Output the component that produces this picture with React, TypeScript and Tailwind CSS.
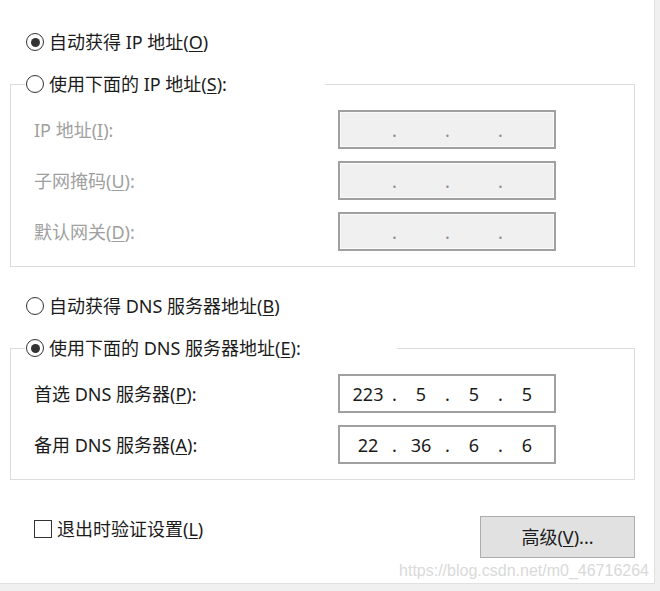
import React from "react";

const FONT = { fontFamily: '"Noto Sans", "Noto Sans CJK SC", sans-serif' };

function Radio({ checked }: { checked?: boolean }) {
  return (
    <span className="w-[18px] h-[18px] rounded-full border border-[#333] bg-white flex items-center justify-center shrink-0">
      {checked && <span className="w-[9px] h-[9px] rounded-full bg-[#333]" />}
    </span>
  );
}

function Key({ k }: { k: string }) {
  return <span className="underline underline-offset-2 decoration-1">{k}</span>;
}

function IpBox({ value, disabled }: { value?: string[]; disabled?: boolean }) {
  const parts = value ?? ["", "", "", ""];
  return (
    <div
      className={
        "w-[218px] h-[39px] border-2 border-[#a0a0a0] flex items-center pl-[1.5px] " +
        (disabled ? "bg-[#f0f0f0] shadow-[inset_0_0_0_1px_#fafafa]" : "bg-white")
      }
    >
      {parts.map((p, i) => (
        <React.Fragment key={i}>
          <span className="w-[53px] text-center text-[#1b1b1b]">{p}</span>
          {i < 3 && (
            <span className={"w-0 flex justify-center " + (disabled ? "text-[#8a8a96]" : "text-[#1b1b1b]")}>.</span>
          )}
        </React.Fragment>
      ))}
    </div>
  );
}

function Row({ label, k, tail, value, disabled }: { label: string; k: string; tail: string; value?: string[]; disabled?: boolean }) {
  return (
    <div className="flex items-center">
      <span className={"w-[304px] " + (disabled ? "text-[#a0a0a0]" : "text-[#1b1b1b]")}>
        {label}(<Key k={k} />){tail}
      </span>
      <IpBox value={value} disabled={disabled} />
    </div>
  );
}

export default function App() {
  return (
    <div className="w-[660px] h-[591px] bg-[#f0f0f0] text-[18px] leading-6" style={FONT}>
      <div className="relative w-[655px] h-[584px] bg-white border-r border-b border-[#e0e0e0] pl-[10px] pt-[30px] text-[#1b1b1b]">
        <div className="h-6 flex items-center gap-[5px] pl-[16px]">
          <Radio checked />
          <span>
            自动获得 IP 地址(<Key k="O" />)
          </span>
        </div>

        <fieldset className="mt-[18px] w-[625px] border border-[#dcdcdc]">
          <legend className="ml-[14px] w-[300px] h-6 pl-[1px] flex items-center gap-[5px]">
            <Radio />
            <span>
              使用下面的 IP 地址(<Key k="S" />):
            </span>
          </legend>
          <div className="pl-[23px] pt-[14px] pb-[15px] flex flex-col gap-[12px]">
            <Row label="IP 地址" k="I" tail=":" disabled />
            <Row label="子网掩码" k="U" tail=":" disabled />
            <Row label="默认网关" k="D" tail=":" disabled />
          </div>
        </fieldset>

        <div className="mt-[27px] h-6 flex items-center gap-[5px] pl-[16px]">
          <Radio />
          <span>
            自动获得 DNS 服务器地址(<Key k="B" />)
          </span>
        </div>

        <fieldset className="mt-[18px] w-[625px] border border-[#dcdcdc]">
          <legend className="ml-[14px] w-[372px] h-6 pl-[1px] flex items-center gap-[5px]">
            <Radio checked />
            <span>
              使用下面的 DNS 服务器地址(<Key k="E" />):
            </span>
          </legend>
          <div className="pl-[23px] pt-[14px] pb-[15px] flex flex-col gap-[12px]">
            <Row label="首选 DNS 服务器" k="P" tail=":" value={["223", "5", "5", "5"]} />
            <Row label="备用 DNS 服务器" k="A" tail=":" value={["22", "36", "6", "6"]} />
          </div>
        </fieldset>

        <div className="mt-[36px] w-[625px] pl-[24px] flex justify-between items-start">
          <div className="h-[26px] flex items-center gap-[5px]">
            <span className="w-[18px] h-[18px] border border-[#333] bg-white shrink-0" />
            <span>
              退出时验证设置(<Key k="L" />)
            </span>
          </div>
          <button className="w-[155px] h-[42px] bg-[#e1e1e1] border border-[#adadad] text-[#1b1b1b]">
            高级(<Key k="V" />)...
          </button>
        </div>

        <div
          className="absolute right-[5px] bottom-[3px] text-[16px] leading-[18px] text-[#d9d9d9]"
          style={{ fontFamily: '"Liberation Sans", Arial, sans-serif' }}
        >
          https://blog.csdn.net/m0_46716264
        </div>
      </div>
    </div>
  );
}
